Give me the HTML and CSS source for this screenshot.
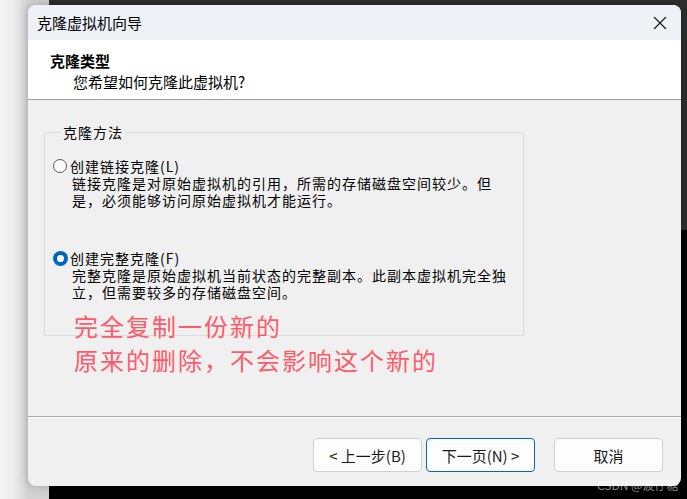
FILE: index.html
```html
<!DOCTYPE html>
<html lang="zh-CN">
<head>
<meta charset="utf-8">
<title>克隆虚拟机向导</title>
<link rel="stylesheet" href="styles.css">
</head>
<body>
<div class="backwin"></div>
<div class="dialog">
  <div class="titlebar">
    <span class="title">克隆虚拟机向导</span>
    <svg class="close" width="14" height="14" viewBox="0 0 14 14"><path d="M1 1 L13 13 M13 1 L1 13" stroke="#1a1a1a" stroke-width="1.2" fill="none"/></svg>
  </div>
  <div class="header">
    <div class="h-title">克隆类型</div>
    <div class="h-sub">您希望如何克隆此虚拟机?</div>
  </div>
  <div class="body">
    <fieldset class="group">
      <legend>克隆方法</legend>
      <div class="option">
        <div class="opt-row"><span class="radio"></span><span class="opt-label">创建链接克隆(L)</span></div>
        <div class="opt-desc">链接克隆是对原始虚拟机的引用，所需的存储磁盘空间较少。但<br>是，必须能够访问原始虚拟机才能运行。</div>
      </div>
      <div class="option">
        <div class="opt-row"><span class="radio checked"></span><span class="opt-label">创建完整克隆(F)</span></div>
        <div class="opt-desc">完整克隆是原始虚拟机当前状态的完整副本。此副本虚拟机完全独<br>立，但需要较多的存储磁盘空间。</div>
      </div>
    </fieldset>
    <div class="note">完全复制一份新的<br>原来的删除，不会影响这个新的</div>
  </div>
  <div class="footer">
    <button class="btn">&lt; 上一步(B)</button>
    <button class="btn primary">下一页(N) &gt;</button>
    <button class="btn cancel">取消</button>
  </div>
</div>
<div class="watermark">CSDN @波仔糖</div>
</body>
</html>
```
FILE: styles.css
```css
html, body {
  margin: 0;
  padding: 0;
}
body {
  width: 687px;
  height: 499px;
  overflow: hidden;
  position: relative;
  background: linear-gradient(to right, #f4f4f4 0px, #ececec 14px, #d2d2d2 28px);
  font-family: "Noto Sans CJK SC", "Noto Sans", sans-serif;
  color: #000;
}
.backwin {
  position: absolute;
  left: 49px;
  top: 0;
  right: 0;
  bottom: 0;
  background: linear-gradient(to bottom, #2e2e2e 0px, #2e2e2e 230px, #000 230px);
}
.dialog {
  position: absolute;
  left: 28px;
  top: 5px;
  width: 653px;
  height: 481px;
  background: #f0f0f0;
  border-radius: 8px;
  overflow: hidden;
  box-shadow: 0 0 10px rgba(0, 0, 0, 0.25);
  display: flex;
  flex-direction: column;
}
.titlebar {
  height: 35px;
  background: #eef2f7;
  display: flex;
  align-items: center;
  justify-content: space-between;
  padding: 0 14px 0 9px;
  flex: none;
}
.title {
  font-size: 15px;
  line-height: 17px;
}
.close {
  display: block;
}
.header {
  background: #ffffff;
  border-bottom: 1px solid #a0a0a0;
  padding: 11px 0 0 22px;
  box-sizing: border-box;
  height: 60px;
  flex: none;
}
.h-title {
  font-size: 15px;
  font-weight: bold;
  line-height: 19px;
}
.h-sub {
  font-size: 15px;
  line-height: 20px;
  margin-top: 2px;
  padding-left: 23px;
}
.body {
  flex: 1;
  position: relative;
  padding: 24px 0 0 16px;
  border-bottom: 1px solid #a9a9a9;
  box-shadow: 0 1px 0 #ffffff;
}
.group {
  width: 480px;
  height: 212px;
  box-sizing: border-box;
  margin: 0;
  padding: 16px 0 0 9px;
  border: 1px solid #dcdcdc;
  font-size: 14px;
  letter-spacing: 1px;
}
.group legend {
  margin-left: 7px;
  padding: 0 2px;
  font-size: 14px;
  letter-spacing: 1px;
  line-height: 17px;
}
.option {
  margin-bottom: 40px;
}
.opt-row {
  display: flex;
  align-items: center;
  height: 18px;
}
.radio {
  width: 14px;
  height: 14px;
  box-sizing: border-box;
  border: 1px solid #5a5a5a;
  border-radius: 50%;
  background: #fbfbfb;
  margin-right: 3px;
  margin-left: -1px;
  flex: none;
}
.radio.checked {
  width: 15px;
  height: 15px;
  border: 4px solid #0067c0;
  background: #ffffff;
  margin-right: 2px;
}
.opt-label {
  line-height: 18px;
}
.opt-desc {
  padding-left: 18px;
  line-height: 17px;
}
.note {
  position: absolute;
  left: 46px;
  top: 209px;
  color: #ff5a6a;
  font-size: 24px;
  letter-spacing: 2px;
  line-height: 34px;
}
.footer {
  height: 69px;
  flex: none;
  display: flex;
  justify-content: flex-end;
  align-items: flex-start;
  padding: 21px 18px 0 0;
  box-sizing: border-box;
}
.btn {
  width: 109px;
  height: 34px;
  background: #fdfdfd;
  border: 1px solid #d0d0d0;
  border-radius: 4px;
  font-family: "Noto Sans CJK SC", "Noto Sans", sans-serif;
  font-size: 15px;
  color: #1a1a1a;
  padding: 0;
  margin-left: 4px;
}
.btn.primary {
  border-color: #0067c0;
}
.btn.cancel {
  margin-left: 19px;
}
.watermark {
  position: absolute;
  left: 597px;
  top: 477px;
  font-size: 12px;
  line-height: 16px;
  white-space: nowrap;
  color: rgba(255, 255, 255, 0.55);
  font-family: "Noto Sans CJK SC", sans-serif;
}
```
